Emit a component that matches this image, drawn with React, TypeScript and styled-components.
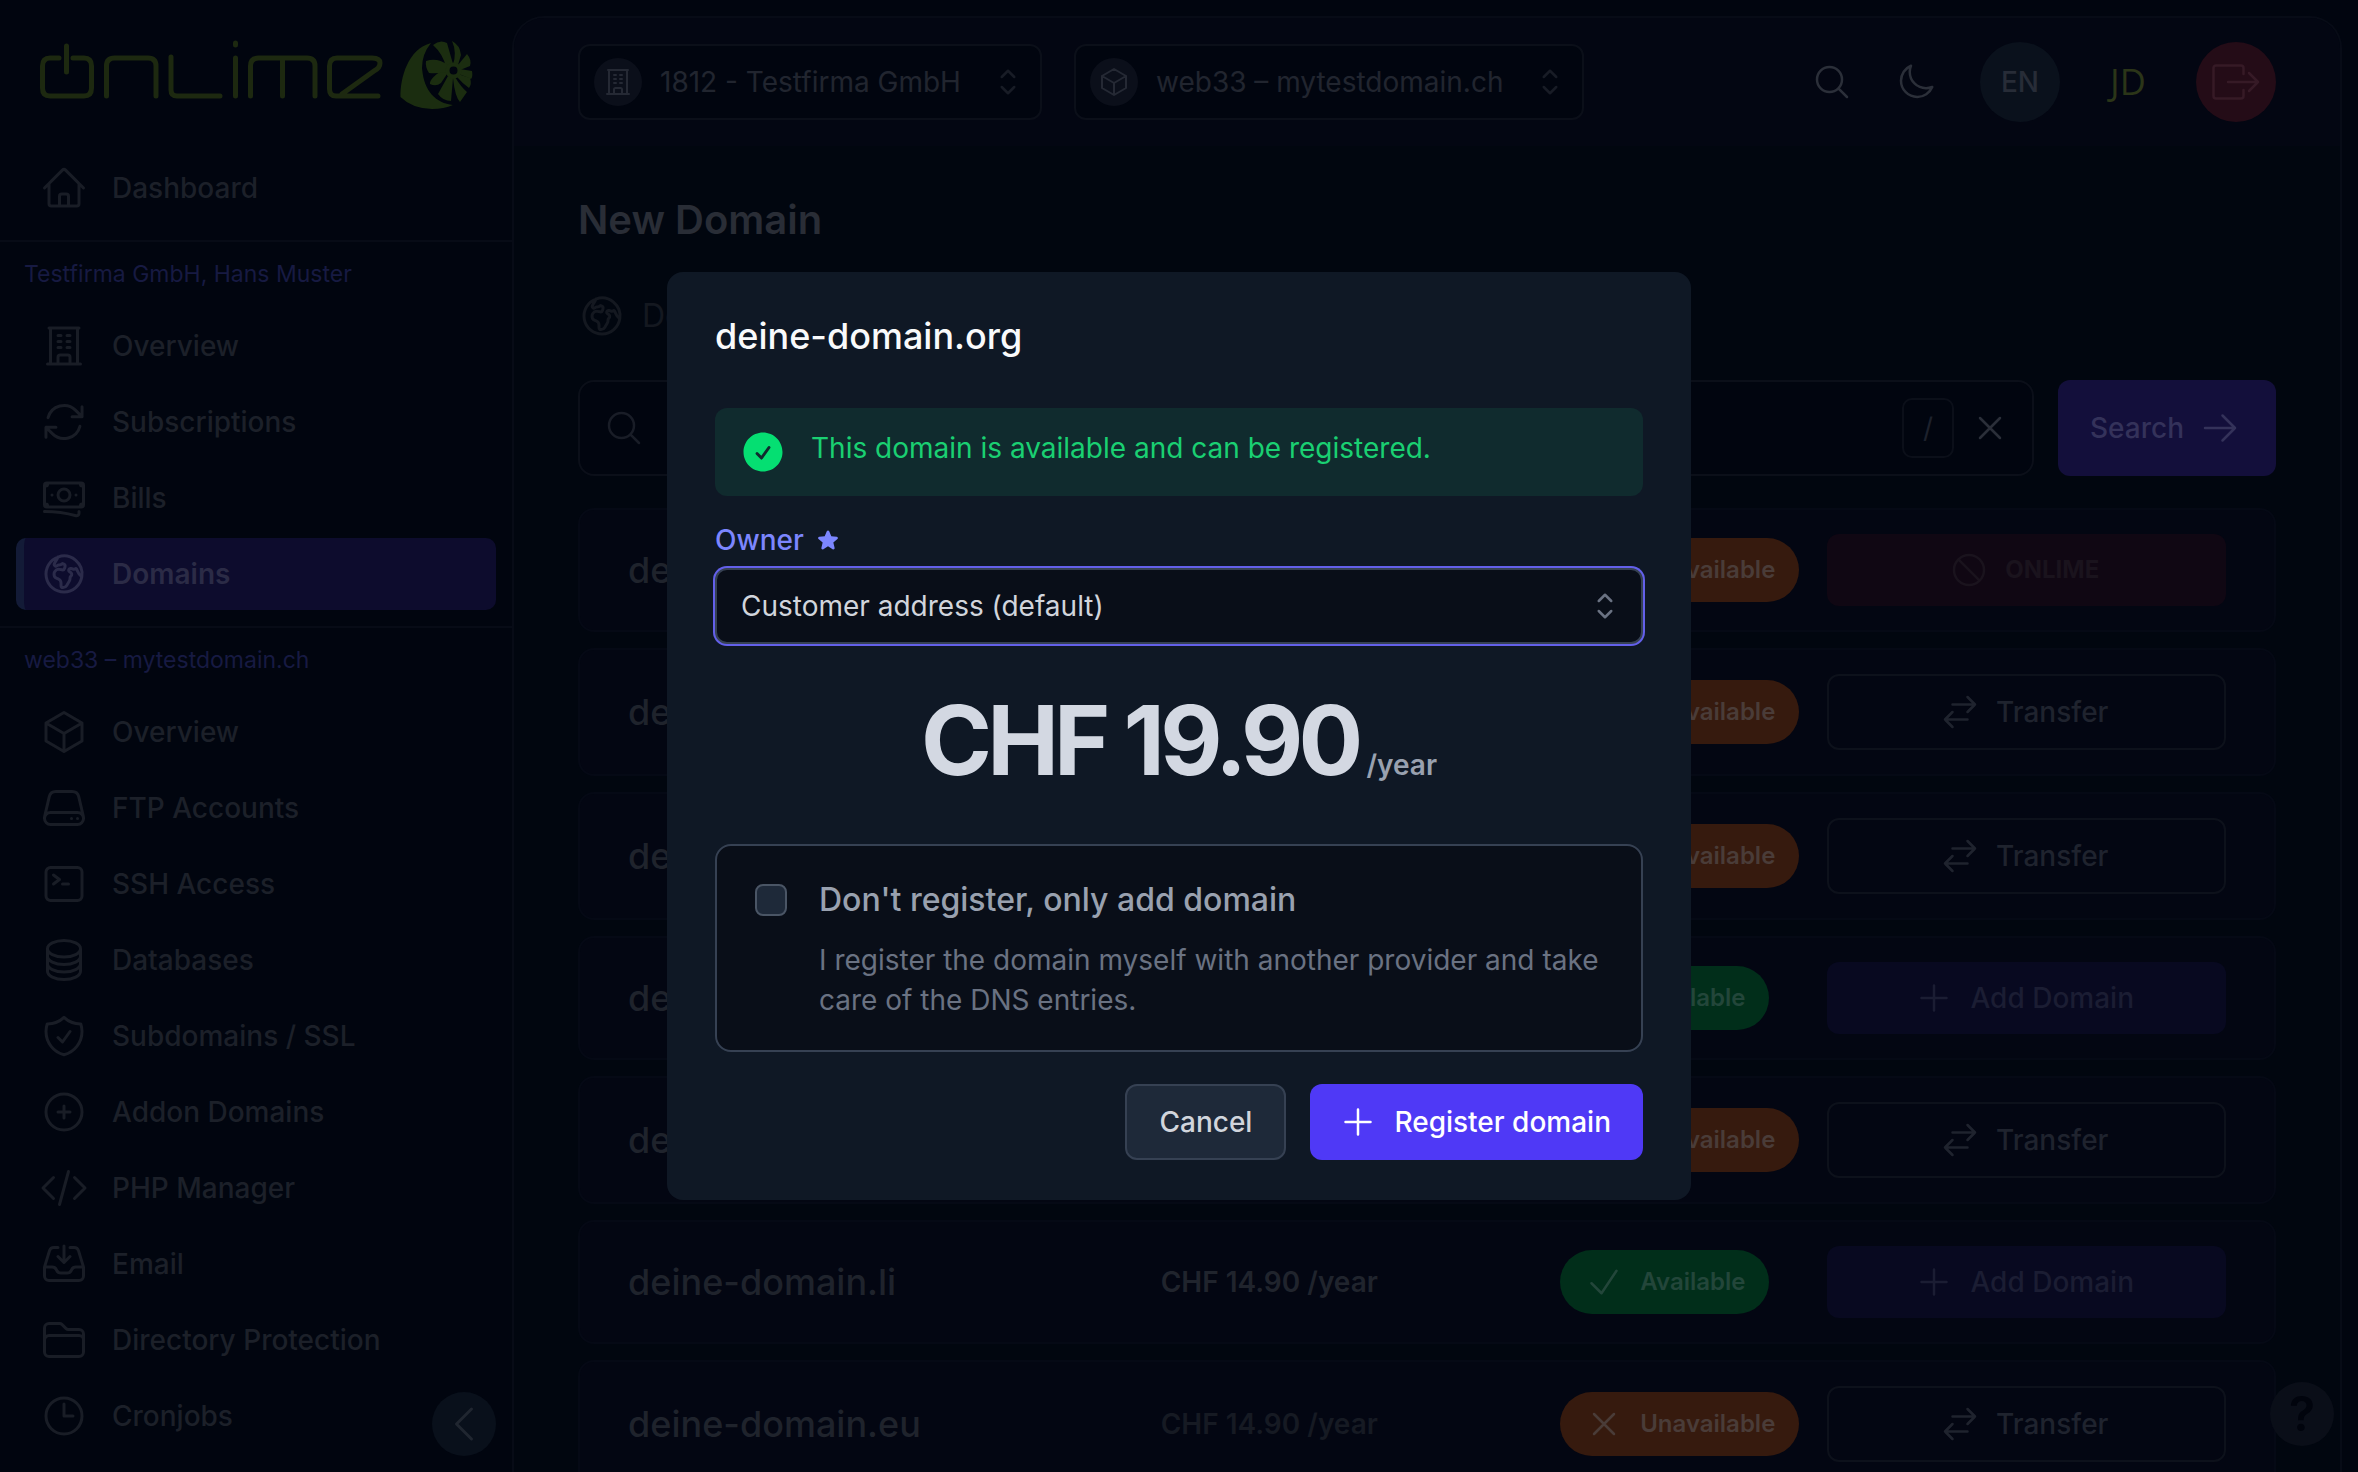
import React, { useState } from "react";
import styled, { createGlobalStyle, css } from "styled-components";
import {
  HiOutlineArrowPath,
  HiOutlineArrowRight,
  HiOutlineArrowsRightLeft,
  HiOutlineBanknotes,
  HiOutlineBuildingOffice,
  HiOutlineCheck,
  HiOutlineChevronLeft,
  HiOutlineChevronUpDown,
  HiOutlineCircleStack,
  HiOutlineClock,
  HiOutlineCodeBracket,
  HiOutlineCommandLine,
  HiOutlineCube,
  HiOutlineFolder,
  HiOutlineGlobeEuropeAfrica,
  HiOutlineHome,
  HiOutlineInboxArrowDown,
  HiOutlineMagnifyingGlass,
  HiOutlineMoon,
  HiOutlineNoSymbol,
  HiOutlinePlus,
  HiOutlinePlusCircle,
  HiOutlineServer,
  HiOutlineShieldCheck,
  HiOutlineXMark,
  HiCheckCircle,
  HiStar,
} from "react-icons/hi2";

const color = {
  page: "#01050f",
  content: "#01060f",
  bar: "#030612",
  card: "#030612",
  line: "#070b16",
  field: "#0b0f19",
  navText: "#1c2029",
  navIcon: "#191d26",
  heading: "#292d36",
  section: "#171a42",
};

const GlobalStyle = createGlobalStyle`
  *, *::before, *::after { box-sizing: border-box; }
  html, body { margin: 0; background: ${color.page}; }
  body { font-family: Inter, "Liberation Sans", sans-serif; font-size: 28px; line-height: 40px; color: ${color.navText}; }
  button, input, select { font: inherit; color: inherit; margin: 0; }
  button { cursor: pointer; border: 0; background: none; padding: 0; }
  h1, h2, p { margin: 0; }
  svg { flex: none; display: block; }
`;

const Shell = styled.div`
  display: flex;
  height: 100vh;
  overflow: hidden;
`;

/* ---------- sidebar ---------- */

const Sidebar = styled.aside`
  position: relative;
  flex: none;
  width: 512px;
  height: 100%;
  overflow: hidden;
`;

const LogoLink = styled.a`
  display: block;
  padding: 36px;
  height: 152px;
`;

const NavGroup = styled.nav`
  display: flex;
  flex-direction: column;
  gap: 4px;
  padding: 0 16px 16px;
`;

const SectionTitle = styled.h2`
  border-top: 2px solid ${color.line};
  padding: 16px 24px 20px;
  font-size: 23px;
  line-height: 32px;
  font-weight: 400;
  color: ${color.section};
`;

const NavLink = styled.a<{ $active?: boolean }>`
  display: flex;
  align-items: center;
  gap: 24px;
  height: 72px;
  padding: 0 24px;
  border-radius: 10px;
  font-weight: 500;
  text-decoration: none;
  white-space: nowrap;
  color: ${color.navText};
  svg {
    color: ${color.navIcon};
  }
  ${(p) =>
    p.$active &&
    css`
      padding-left: 16px;
      border-left: 8px solid #131b37;
      background: #0d0c2d;
      font-weight: 600;
      color: #2b2b46;
      svg {
        color: #2b2b4a;
      }
    `}
`;

const CollapseButton = styled.button`
  position: absolute;
  right: 16px;
  bottom: 16px;
  width: 64px;
  height: 64px;
  display: grid;
  place-items: center;
  border-radius: 50%;
  background: #09101b;
  color: #202630;
`;

/* ---------- main panel ---------- */

const Main = styled.main`
  flex: 1;
  min-width: 0;
  margin: 16px 16px 0 0;
  border: 2px solid ${color.line};
  border-bottom: 0;
  border-radius: 32px 32px 0 0;
  background: ${color.content};
  overflow: hidden;
`;

const TopBar = styled.header`
  display: flex;
  align-items: center;
  gap: 32px;
  padding: 24px 64px;
  background: ${color.bar};
`;

const PickerBox = styled.label<{ $width: number }>`
  display: flex;
  align-items: center;
  width: ${(p) => p.$width}px;
  height: 76px;
  padding: 0 12px 0 14px;
  gap: 18px;
  border: 2px solid ${color.field};
  border-radius: 12px;
  background: ${color.page};
  color: #21252f;
  > svg {
    color: #181c26;
  }
`;

const PickerIcon = styled.span`
  display: grid;
  place-items: center;
  width: 48px;
  height: 48px;
  border-radius: 50%;
  background: #0b0f1a;
  color: #252934;
`;

const BareSelect = styled.select`
  flex: 1;
  min-width: 0;
  appearance: none;
  border: 0;
  outline: 0;
  padding: 0;
  background: transparent;
  height: 40px;
`;

const Tools = styled.div`
  display: flex;
  align-items: center;
  gap: 44px;
  margin-left: auto;
  color: #2b2f39;
`;

const Rounds = styled.div`
  display: flex;
  gap: 28px;
`;

const Round = styled.button<{ $tone?: "plain" | "avatar" | "danger" }>`
  display: grid;
  place-items: center;
  width: 80px;
  height: 80px;
  border-radius: 50%;
  font-weight: 500;
  ${(p) => (p.$tone === "plain" ? "background: #0a111c; color: #272c37;" : "")}
  ${(p) => (p.$tone === "danger" ? "background: #240c17; color: #361a26;" : "")}
  ${(p) =>
    p.$tone === "avatar" &&
    css`
      font-family: "Open Sans", "Noto Sans", sans-serif;
      font-size: 36px;
      font-weight: 400;
      color: #2b3518;
    `}
`;

const Content = styled.div`
  display: flex;
  flex-direction: column;
  padding: 54px 64px 64px;
`;

const PageTitle = styled.h1`
  font-size: 40px;
  line-height: 40px;
  font-weight: 600;
  color: ${color.heading};
`;

const Crumb = styled.a`
  display: flex;
  align-items: center;
  gap: 16px;
  margin: 52px 0 40px;
  height: 48px;
  font-size: 32px;
  color: #141820;
  text-decoration: none;
`;

const SearchForm = styled.form`
  display: flex;
  gap: 24px;
  margin-bottom: 32px;
`;

const SearchField = styled.label`
  flex: 1;
  display: flex;
  align-items: center;
  gap: 16px;
  height: 96px;
  padding: 0 22px 0 24px;
  border: 2px solid ${color.field};
  border-radius: 16px;
  background: ${color.page};
  > svg {
    color: #191d27;
  }
`;

const SearchInput = styled.input`
  flex: 1;
  min-width: 0;
  border: 0;
  outline: 0;
  background: transparent;
`;

const Key = styled.kbd`
  display: grid;
  place-items: center;
  width: 52px;
  height: 60px;
  border: 2px solid ${color.field};
  border-radius: 10px;
  font: inherit;
  color: #1d212c;
`;

const ClearButton = styled.button`
  color: #2b2f39;
`;

const SearchButton = styled.button`
  display: flex;
  align-items: center;
  gap: 16px;
  padding: 0 36px 0 32px;
  border-radius: 12px;
  background: #130f3b;
  font-weight: 500;
  color: #34325a;
`;

const Results = styled.div`
  display: grid;
  gap: 16px;
`;

const ResultCard = styled.article`
  display: grid;
  grid-template-columns: 4fr 3fr 2fr 3fr;
  align-items: center;
  padding: 24px 48px;
  border: 2px solid #050915;
  border-radius: 16px;
  background: ${color.card};
`;

const DomainName = styled.div`
  font-size: 36px;
  font-weight: 500;
  color: #1f232c;
`;

const RowPrice = styled.div<{ $open: boolean }>`
  font-weight: 600;
  color: ${(p) => (p.$open ? "#20242d" : "#161a23")};
`;

const Badge = styled.span<{ $open: boolean }>`
  justify-self: start;
  display: flex;
  align-items: center;
  gap: 16px;
  height: 64px;
  padding: 0 24px;
  border-radius: 32px;
  font-size: 24px;
  font-weight: 600;
  background: ${(p) => (p.$open ? "#012e1a" : "#361a0e")};
  color: ${(p) => (p.$open ? "#23463a" : "#4a3c38")};
`;

const ActionButton = styled.button<{ $kind: Kind }>`
  display: flex;
  align-items: center;
  justify-content: center;
  gap: 16px;
  height: 72px;
  padding-right: 4px;
  border-radius: 12px;
  font-weight: 500;
  white-space: nowrap;
  ${(p) =>
    p.$kind === "transfer" &&
    css`
      height: 76px;
      border: 2px solid #0d111b;
      color: #1f232e;
    `}
  ${(p) => p.$kind === "add" && "background: #080920; color: #1b1d33;"}
  ${(p) => p.$kind === "own" && "background: #100713; color: #1a131d; font-size: 24px; font-weight: 700;"}
`;

const HelpButton = styled.button`
  position: fixed;
  right: 24px;
  bottom: 26px;
  width: 64px;
  height: 64px;
  display: grid;
  place-items: center;
  border-radius: 50%;
  background: #0a0e18;
  color: #01040d;
  font-size: 48px;
  font-weight: 600;
`;

/* ---------- dialog ---------- */

const Backdrop = styled.div`
  position: fixed;
  inset: 0;
  display: grid;
  place-items: center;
`;

const Dialog = styled.section`
  width: 1024px;
  max-width: calc(100vw - 64px);
  padding: 48px 48px 40px;
  border-radius: 16px;
  background: #0f1825;
`;

const DialogTitle = styled.h2`
  margin-bottom: 56px;
  font-size: 36px;
  line-height: 32px;
  font-weight: 500;
  color: #f9fafb;
`;

const Notice = styled.div`
  display: flex;
  align-items: flex-start;
  gap: 24px;
  padding: 20px 24px;
  border-radius: 12px;
  background: #102b2e;
  color: #1ad072;
  svg {
    color: #05df72;
  }
`;

const OwnerLabel = styled.label`
  display: flex;
  align-items: center;
  gap: 12px;
  margin: 24px 0 8px;
  font-weight: 500;
  color: #7c86ff;
`;

const OwnerField = styled.div`
  display: flex;
  align-items: center;
  height: 76px;
  padding: 0 16px 0 24px;
  border: 2px solid #364153;
  border-radius: 12px;
  box-shadow: 0 0 0 2px #6360ea;
  background: #090e18;
  color: #d1d5dc;
  svg {
    color: #6a7282;
  }
`;

const PriceLine = styled.p`
  display: flex;
  align-items: baseline;
  justify-content: center;
  gap: 8px;
  margin: 48px 0 56px;
  line-height: 1;
  font-weight: 600;
  color: #99a1af;
`;

const Amount = styled.strong`
  font-size: 96px;
  font-weight: 700;
  letter-spacing: -0.05em;
  color: #d3d8e2;
`;

const OptionCard = styled.div`
  display: flex;
  gap: 32px;
  padding: 38px 38px 30px;
  border: 2px solid #364153;
  border-radius: 16px;
  background: #090e18;
`;

const Checkbox = styled.input`
  flex: none;
  appearance: none;
  width: 32px;
  height: 32px;
  margin: 0;
  border: 2px solid #4a5565;
  border-radius: 8px;
  background: #1e2939;
  &:checked {
    background: #4f39f6;
  }
`;

const OptionLabel = styled.label`
  display: block;
  margin-bottom: 24px;
  font-size: 32px;
  line-height: 32px;
  font-weight: 500;
  color: #99a1af;
`;

const OptionHint = styled.p`
  color: #6a7282;
`;

const Actions = styled.div`
  display: flex;
  justify-content: flex-end;
  gap: 24px;
  margin-top: 32px;
`;

const DialogButton = styled.button<{ $primary?: boolean }>`
  display: flex;
  align-items: center;
  gap: 16px;
  height: 76px;
  padding: 0 32px;
  border: 2px solid #364153;
  border-radius: 12px;
  background: #1e2939;
  font-weight: 500;
  color: #d1d5dc;
  ${(p) => p.$primary && "padding: 0 32px 0 28px; border: 0; background: #4f39f6; color: #fff;"}
`;

/* ---------- drawings ---------- */

const Logo = () => (
  <svg width="440" height="80" viewBox="36 36 440 80" fill="none" stroke="#1d2910" strokeWidth="5" strokeLinecap="round" strokeLinejoin="round" role="img" aria-label="onlime">
    <path d="M59 58H50q-7.500 0-7.500 8V88q0 8 7.500 8H84q7.500 0 7.500-8V66q0-8-7.500-8H73" />
    <path d="M66.500 46V72" />
    <path d="M106.500 96V66q0-8 8-8H148q8 0 8 8V96" />
    <path d="M171 57V90q0 6 6 6H220" />
    <path d="M235.500 58V96M235.500 43V45" />
    <path d="M250.500 96V66q0-8 8-8H307q8 0 8 8V96M282.500 60V96" />
    <path d="M378 96H336q-6.500 0-6.500-7V66q0-8 7.500-8H372q8 0 8 5t-6 8L342 94" />
    <g fill="#1b2d10" stroke="none">
      <path d="M431 43C408 49 400 78 400.500 97Q412 108.500 432 109Q444 109 453 105C436 103 424 92 422 68Q422 54 431 43Z" />
      <path d="M433 45Q440 39 447 43L453 64L446 67Q443 54 433 45Z" />
      <path d="M452 41Q460 45 461 55L458 65H453Q457 52 452 41Z" />
      <path d="M458 65L467 54Q472 60 470 66L460 70Z" />
      <path d="M460 69L472 71Q473 77 471 79L459 74Z" />
      <path d="M458 74L470 78Q472 84 469 88Q463 84 457 77Z" />
      <path d="M455 77Q461 87 467 92L460 102Q455 97 453 78Z" />
      <path d="M453 78L451 101Q443 101 438 94L448 76Z" />
      <path d="M449 71L441 83Q436 87 430 84Q429 78 446 68Z" />
      <path d="M426 61Q437 57 448 65L447 72Q436 74 429 73Q425 67 426 61Z" />
      <path fillRule="evenodd" d="M453.500 62.500a8 8 0 1 1 0 16a8 8 0 1 1 0-16M453.500 66.500a4 4 0 1 0 0 8a4 4 0 1 0 0-8" />
    </g>
  </svg>
);

const LogoutGlyph = () => (
  <svg width="48" height="36" viewBox="0 0 48 36" fill="none" stroke="currentColor" strokeWidth="2.500" strokeLinecap="round" strokeLinejoin="round">
    <path d="M31.500 10V4a2.500 2.500 0 0 0-2.500-2.500H4A2.500 2.500 0 0 0 1.500 4V32A2.500 2.500 0 0 0 4 34.500H29A2.500 2.500 0 0 0 31.500 32V26M16 18H46M37 9L46 18L37 27" />
  </svg>
);

/* ---------- data ---------- */

type Kind = "transfer" | "add" | "own";
type Icon = React.ComponentType<{ size?: number }>;

const account: [string, Icon][] = [
  ["Overview", HiOutlineBuildingOffice],
  ["Subscriptions", HiOutlineArrowPath],
  ["Bills", HiOutlineBanknotes],
  ["Domains", HiOutlineGlobeEuropeAfrica],
];

const hosting: [string, Icon][] = [
  ["Overview", HiOutlineCube],
  ["FTP Accounts", HiOutlineServer],
  ["SSH Access", HiOutlineCommandLine],
  ["Databases", HiOutlineCircleStack],
  ["Subdomains / SSL", HiOutlineShieldCheck],
  ["Addon Domains", HiOutlinePlusCircle],
  ["PHP Manager", HiOutlineCodeBracket],
  ["Email", HiOutlineInboxArrowDown],
  ["Directory Protection", HiOutlineFolder],
  ["Cronjobs", HiOutlineClock],
];

const results: { name: string; price: string; kind: Kind }[] = [
  { name: "deine-domain.ch", price: "CHF 14.90 /year", kind: "own" },
  { name: "deine-domain.com", price: "CHF 19.90 /year", kind: "transfer" },
  { name: "deine-domain.net", price: "CHF 19.90 /year", kind: "transfer" },
  { name: "deine-domain.org", price: "CHF 19.90 /year", kind: "add" },
  { name: "deine-domain.de", price: "CHF 14.90 /year", kind: "transfer" },
  { name: "deine-domain.li", price: "CHF 14.90 /year", kind: "add" },
  { name: "deine-domain.eu", price: "CHF 14.90 /year", kind: "transfer" },
];

const actions: Record<Kind, [string, Icon]> = {
  transfer: ["Transfer", HiOutlineArrowsRightLeft],
  add: ["Add Domain", HiOutlinePlus],
  own: ["ONLIME", HiOutlineNoSymbol],
};

function NavItem({ label, icon: Glyph, active }: { label: string; icon: Icon; active?: boolean }) {
  return (
    <NavLink href="#" $active={active} aria-current={active ? "page" : undefined}>
      <Glyph size={48} />
      {label}
    </NavLink>
  );
}

function Picker({ label, value, icon: Glyph, width }: { label: string; value: string; icon: Icon; width: number }) {
  return (
    <PickerBox $width={width}>
      <PickerIcon>
        <Glyph size={32} />
      </PickerIcon>
      <BareSelect aria-label={label}>
        <option>{value}</option>
      </BareSelect>
      <HiOutlineChevronUpDown size={40} />
    </PickerBox>
  );
}

function Result({ name, price, kind }: { name: string; price: string; kind: Kind }) {
  const open = kind === "add";
  const [text, Glyph] = actions[kind];
  return (
    <ResultCard>
      <DomainName>{name}</DomainName>
      <RowPrice $open={open}>{price}</RowPrice>
      <Badge $open={open}>
        {open ? <HiOutlineCheck size={40} /> : <HiOutlineXMark size={40} />}
        {open ? "Available" : "Unavailable"}
      </Badge>
      <ActionButton type="button" $kind={kind}>
        <Glyph size={40} />
        {text}
      </ActionButton>
    </ResultCard>
  );
}

export default function App() {
  const [onlyAdd, setOnlyAdd] = useState(false);
  return (
    <>
      <GlobalStyle />
      <Shell>
        <Sidebar>
          <LogoLink href="#">
            <Logo />
          </LogoLink>
          <NavGroup aria-label="Main">
            <NavItem label="Dashboard" icon={HiOutlineHome} />
          </NavGroup>
          <SectionTitle>Testfirma GmbH, Hans Muster</SectionTitle>
          <NavGroup aria-label="Account">
            {account.map(([label, icon]) => (
              <NavItem key={label} label={label} icon={icon} active={label === "Domains"} />
            ))}
          </NavGroup>
          <SectionTitle>web33 – mytestdomain.ch</SectionTitle>
          <NavGroup aria-label="Hosting">
            {hosting.map(([label, icon]) => (
              <NavItem key={label} label={label} icon={icon} />
            ))}
          </NavGroup>
          <CollapseButton type="button" aria-label="Collapse sidebar">
            <HiOutlineChevronLeft size={48} />
          </CollapseButton>
        </Sidebar>

        <Main>
          <TopBar>
            <Picker label="Customer" value="1812 - Testfirma GmbH" icon={HiOutlineBuildingOffice} width={464} />
            <Picker label="Subscription" value="web33 – mytestdomain.ch" icon={HiOutlineCube} width={510} />
            <Tools>
              <button type="button" aria-label="Search">
                <HiOutlineMagnifyingGlass size={40} />
              </button>
              <button type="button" aria-label="Dark mode">
                <HiOutlineMoon size={40} />
              </button>
              <Rounds>
                <Round type="button" $tone="plain">EN</Round>
                <Round type="button" $tone="avatar">JD</Round>
                <Round type="button" $tone="danger" aria-label="Log out">
                  <LogoutGlyph />
                </Round>
              </Rounds>
            </Tools>
          </TopBar>

          <Content>
            <PageTitle>New Domain</PageTitle>
            <Crumb href="#">
              <HiOutlineGlobeEuropeAfrica size={48} />
              Domains
            </Crumb>
            <SearchForm onSubmit={(e) => e.preventDefault()}>
              <SearchField>
                <HiOutlineMagnifyingGlass size={40} />
                <SearchInput type="text" aria-label="Domain name" />
                <Key>/</Key>
                <ClearButton type="button" aria-label="Clear">
                  <HiOutlineXMark size={40} />
                </ClearButton>
              </SearchField>
              <SearchButton type="submit">
                Search
                <HiOutlineArrowRight size={40} />
              </SearchButton>
            </SearchForm>
            <Results>
              {results.map((r) => (
                <Result key={r.name} {...r} />
              ))}
            </Results>
          </Content>
        </Main>
      </Shell>

      <HelpButton type="button" aria-label="Help">?</HelpButton>

      <Backdrop>
        <Dialog role="dialog" aria-modal="true" aria-labelledby="dialog-title">
          <DialogTitle id="dialog-title">deine-domain.org</DialogTitle>
          <Notice role="status">
            <HiCheckCircle size={48} />
            This domain is available and can be registered.
          </Notice>
          <OwnerLabel htmlFor="owner">
            Owner
            <HiStar size={24} />
          </OwnerLabel>
          <OwnerField>
            <BareSelect id="owner">
              <option>Customer address (default)</option>
            </BareSelect>
            <HiOutlineChevronUpDown size={40} />
          </OwnerField>
          <PriceLine>
            <Amount>CHF 19.90</Amount>
            /year
          </PriceLine>
          <OptionCard>
            <Checkbox id="only-add" type="checkbox" checked={onlyAdd} onChange={(e) => setOnlyAdd(e.target.checked)} />
            <div>
              <OptionLabel htmlFor="only-add">Don't register, only add domain</OptionLabel>
              <OptionHint>I register the domain myself with another provider and take care of the DNS entries.</OptionHint>
            </div>
          </OptionCard>
          <Actions>
            <DialogButton type="button">Cancel</DialogButton>
            <DialogButton type="button" $primary>
              <HiOutlinePlus size={40} />
              Register domain
            </DialogButton>
          </Actions>
        </Dialog>
      </Backdrop>
    </>
  );
}
